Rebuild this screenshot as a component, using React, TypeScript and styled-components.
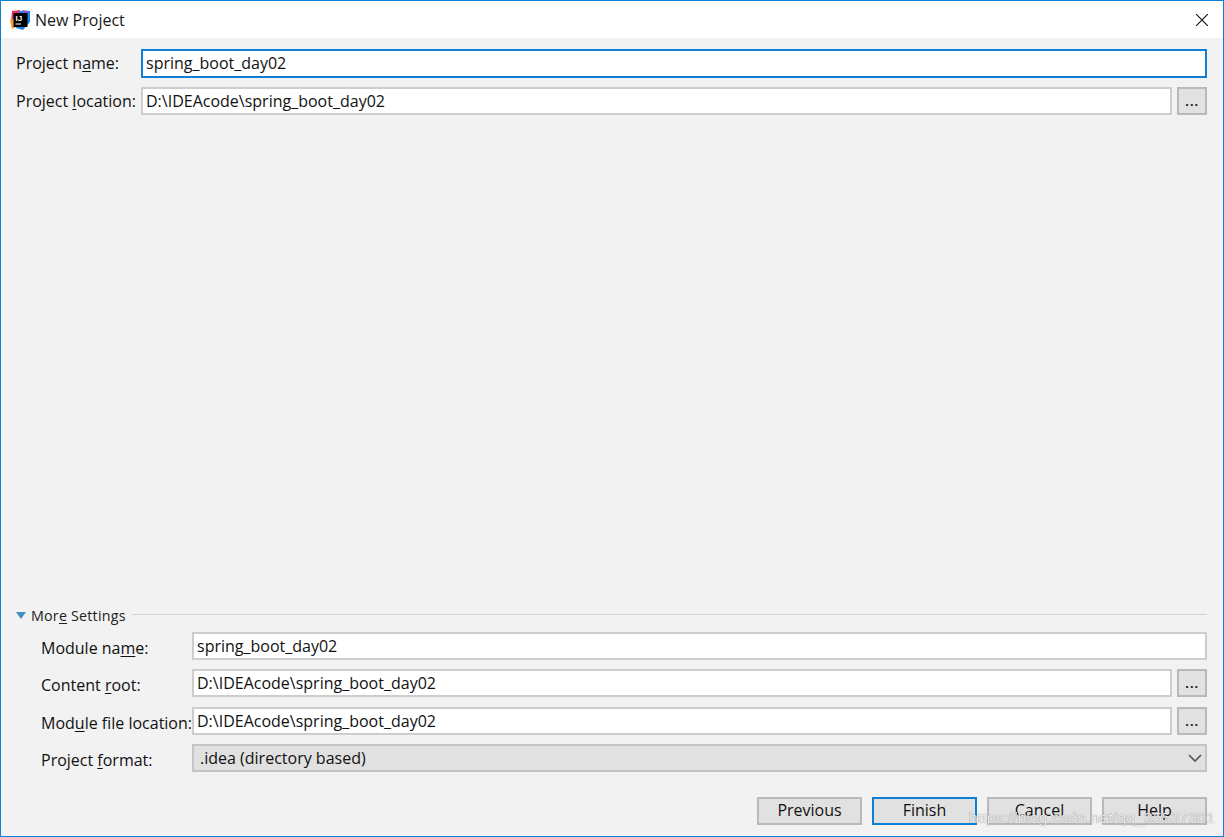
import React from 'react';
import styled, { createGlobalStyle } from 'styled-components';

const GlobalStyle = createGlobalStyle`
    html, body {
        margin: 0;
        padding: 0;
        background: #f2f2f2;
    }
    * {
        box-sizing: border-box;
    }
`;

const Window = styled.div`
    position: relative;
    width: 1224px;
    height: 837px;
    display: flex;
    flex-direction: column;
    border: 1px solid #0f7fd4;
    background: #f2f2f2;
    color: #111;
    font-family: "Open Sans", "Noto Sans", sans-serif;
    font-size: 16px;
    overflow: hidden;
`;

const TitleBar = styled.div`
    height: 37px;
    flex: none;
    display: flex;
    align-items: center;
    padding: 0 15px 0 9px;
    background: #fff;
`;

const Title = styled.span`
    margin-left: 5px;
    flex: 1;
    color: #1a1a1a;
`;

const Body = styled.div`
    flex: 1;
    display: flex;
    flex-direction: column;
    padding: 11px 16px 11px 15px;
`;

const Row = styled.div<{ $labelWidth: number; $labelDrop?: number; $gap?: number }>`
    display: flex;
    align-items: center;
    height: 28px;
    margin-bottom: ${(p) => p.$gap ?? 9.5}px;
    > label {
        width: ${(p) => p.$labelWidth}px;
        padding-top: ${(p) => p.$labelDrop ?? 0}px;
        flex: none;
        white-space: nowrap;
    }
`;

const Field = styled.div<{ $focused?: boolean }>`
    flex: 1;
    height: ${(p) => (p.$focused ? 29 : 28)}px;
    display: flex;
    align-items: center;
    padding-left: 3px;
    background: #fff;
    border: ${(p) => (p.$focused ? '2px solid #0f7fd4' : '2px solid #cdcdcd')};
    white-space: nowrap;
`;

const Browse = styled.button`
    width: 30px;
    height: 28px;
    margin-left: 5px;
    flex: none;
    padding: 0 0 2px;
    background: #e1e1e1;
    border: 2px solid #b9b9b9;
    color: #111;
    font: inherit;
    font-size: 15px;
    font-weight: 600;
    letter-spacing: 0.5px;
`;

const Select = styled.div`
    flex: 1;
    height: 28px;
    display: flex;
    align-items: center;
    justify-content: space-between;
    padding: 0 2px 0 6px;
    background: #e1e1e1;
    border: 2px solid #c4c4c4;
`;

const Spacer = styled.div`
    flex: 1;
`;

const SectionHeader = styled.div`
    height: 18px;
    display: flex;
    align-items: center;
    margin-bottom: 7px;
    font-size: 14.3px;
    letter-spacing: 0.2px;
    color: #222;
    &::after {
        content: "";
        flex: 1;
        height: 1px;
        margin: 0 0 3px 6px;
        background: #d2d2d2;
    }
`;

const Arrow = styled.i`
    width: 0;
    height: 0;
    margin-right: 5px;
    border-left: 5px solid transparent;
    border-right: 5px solid transparent;
    border-top: 7px solid #3f8fc4;
`;

const Settings = styled.div`
    padding-left: 25px;
`;

const Footer = styled.div`
    display: flex;
    justify-content: flex-end;
    gap: 10px;
    margin-top: 25px;
`;

const Button = styled.button<{ $primary?: boolean }>`
    width: 105px;
    height: 28px;
    padding: 0 0 2px;
    background: #e1e1e1;
    border: 2px solid ${(p) => (p.$primary ? '#0f7fd4' : '#b9b9b9')};
    color: #111;
    font: inherit;
`;

const Key = styled.span`
    text-decoration: underline;
    text-underline-offset: 2px;
`;

const Watermark = styled.div`
    position: absolute;
    right: 8px;
    bottom: 9px;
    font-family: "Liberation Sans", sans-serif;
    font-size: 15.5px;
    letter-spacing: 0.25px;
    color: rgba(255, 255, 255, 0.85);
    text-shadow: 0 0 1px rgba(90, 90, 90, 0.9);
    pointer-events: none;
`;

const Logo = () => (
    <svg width="20" height="20" viewBox="0 0 20 20">
        <path d="M2 1 L10 0 L10 12 L3 18 L1 11 Z" fill="#f0345f" />
        <path d="M0 10 L6 8 L6 17 L2 19 Z" fill="#f79b2e" />
        <path d="M9 1 L20 1 L20 12 L13 20 L6 18 Z" fill="#1c83e8" />
        <path d="M12 0 L19 1 L15 8 Z" fill="#7a5ce0" />
        <rect x="3.5" y="3" width="14" height="14" fill="#000" />
        <text x="5.5" y="11" fontSize="8" fontWeight="700" fill="#fff" fontFamily="Liberation Sans">IJ</text>
        <rect x="5.5" y="13.5" width="5.5" height="1" fill="#fff" />
    </svg>
);

const CloseIcon = () => (
    <svg width="12" height="12" viewBox="0 0 12 12">
        <path d="M0 0 L12 12 M12 0 L0 12" stroke="#111" strokeWidth="1.1" fill="none" />
    </svg>
);

const Chevron = () => (
    <svg width="16" height="16" viewBox="0 0 16 16">
        <path d="M2 5 L8 11 L14 5" stroke="#555" strokeWidth="1.6" fill="none" />
    </svg>
);

const App = () => {
    return (
        <Window>
            <GlobalStyle />
            <TitleBar>
                <Logo />
                <Title>New Project</Title>
                <CloseIcon />
            </TitleBar>
            <Body>
                <Row $labelWidth={125}>
                    <label>Project n<Key>a</Key>me:</label>
                    <Field $focused>spring_boot_day02</Field>
                </Row>
                <Row $labelWidth={125}>
                    <label>Project <Key>l</Key>ocation:</label>
                    <Field>D:\IDEAcode\spring_boot_day02</Field>
                    <Browse>...</Browse>
                </Row>
                <Spacer />
                <SectionHeader>
                    <Arrow />
                    <span>Mor<Key>e</Key> Settings</span>
                </SectionHeader>
                <Settings>
                    <Row $labelWidth={151} $labelDrop={4}>
                        <label>Module na<Key>m</Key>e:</label>
                        <Field>spring_boot_day02</Field>
                    </Row>
                    <Row $labelWidth={151} $labelDrop={4}>
                        <label>Content <Key>r</Key>oot:</label>
                        <Field>D:\IDEAcode\spring_boot_day02</Field>
                        <Browse>...</Browse>
                    </Row>
                    <Row $labelWidth={151} $labelDrop={4}>
                        <label>Mod<Key>u</Key>le file location:</label>
                        <Field>D:\IDEAcode\spring_boot_day02</Field>
                        <Browse>...</Browse>
                    </Row>
                    <Row $labelWidth={151} $labelDrop={4} $gap={0}>
                        <label>Project <Key>f</Key>ormat:</label>
                        <Select>
                            <span>.idea (directory based)</span>
                            <Chevron />
                        </Select>
                    </Row>
                </Settings>
                <Footer>
                    <Button>Previous</Button>
                    <Button $primary>Finish</Button>
                    <Button>Cancel</Button>
                    <Button>Help</Button>
                </Footer>
            </Body>
            <Watermark>https://blog.csdn.net/qq_35537301</Watermark>
        </Window>
    );
};

export default App;
